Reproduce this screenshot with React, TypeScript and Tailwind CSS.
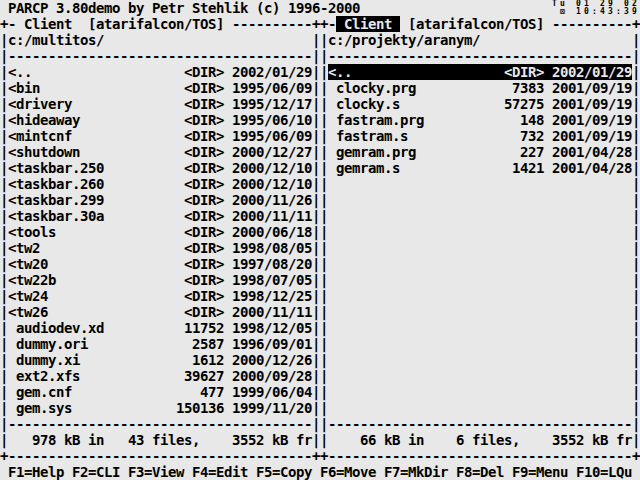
import React from 'react';

// Ein Eintrag im Dateifenster
interface Eintrag {
  name: string;
  dir: boolean;
  size?: string;
  date: string;
}

const links: Eintrag[] = [
  { name: '..', dir: true, date: '2002/01/29' },
  { name: 'bin', dir: true, date: '1995/06/09' },
  { name: 'drivery', dir: true, date: '1995/12/17' },
  { name: 'hideaway', dir: true, date: '1995/06/10' },
  { name: 'mintcnf', dir: true, date: '1995/06/09' },
  { name: 'shutdown', dir: true, date: '2000/12/27' },
  { name: 'taskbar.250', dir: true, date: '2000/12/10' },
  { name: 'taskbar.260', dir: true, date: '2000/12/10' },
  { name: 'taskbar.299', dir: true, date: '2000/11/26' },
  { name: 'taskbar.30a', dir: true, date: '2000/11/11' },
  { name: 'tools', dir: true, date: '2000/06/18' },
  { name: 'tw2', dir: true, date: '1998/08/05' },
  { name: 'tw20', dir: true, date: '1997/08/20' },
  { name: 'tw22b', dir: true, date: '1998/07/05' },
  { name: 'tw24', dir: true, date: '1998/12/25' },
  { name: 'tw26', dir: true, date: '2000/11/11' },
  { name: 'audiodev.xd', dir: false, size: '11752', date: '1998/12/05' },
  { name: 'dummy.ori', dir: false, size: '2587', date: '1996/09/01' },
  { name: 'dummy.xi', dir: false, size: '1612', date: '2000/12/26' },
  { name: 'ext2.xfs', dir: false, size: '39627', date: '2000/09/28' },
  { name: 'gem.cnf', dir: false, size: '477', date: '1999/06/04' },
  { name: 'gem.sys', dir: false, size: '150136', date: '1999/11/20' },
];

const rechts: Eintrag[] = [
  { name: '..', dir: true, date: '2002/01/29' },
  { name: 'clocky.prg', dir: false, size: '7383', date: '2001/09/19' },
  { name: 'clocky.s', dir: false, size: '57275', date: '2001/09/19' },
  { name: 'fastram.prg', dir: false, size: '148', date: '2001/09/19' },
  { name: 'fastram.s', dir: false, size: '732', date: '2001/09/19' },
  { name: 'gemram.prg', dir: false, size: '227', date: '2001/04/28' },
  { name: 'gemram.s', dir: false, size: '1421', date: '2001/04/28' },
];

const zeile = (e?: Eintrag) => {
  if (!e) return ' '.repeat(38);
  const rechtsTeil = `${e.dir ? '<DIR>' : e.size} ${e.date}`;
  return ((e.dir ? '<' : ' ') + e.name).padEnd(38 - rechtsTeil.length) + rechtsTeil;
};

const strich = '-'.repeat(38);

function Row({ children }: { children: React.ReactNode }) {
  return <div className="h-[16px] whitespace-pre leading-[16px]">{children}</div>;
}

function Inv({ children }: { children: React.ReactNode }) {
  return <span className="bg-black text-[#e8e8e8]">{children}</span>;
}

export default function App() {
  const rows: React.ReactNode[] = [];

  rows.push(
    <div key="t" className="flex h-[16px] justify-between">
      <div className="whitespace-pre leading-[16px]"> PARCP 3.80demo by Petr Stehlik (c) 1996-2000</div>
      <div className="flex flex-col items-end whitespace-pre text-[8px] leading-[8px] tracking-[3.18px]">
        <div className="h-[8px]">Tu 01 29 02</div>
        <div className="h-[8px]">⊠ 10:43:39</div>
      </div>
    </div>
  );
  rows.push(
    <Row key="h">
      {'+- Client  [atarifalcon/TOS] ----------++-'}
      <Inv> Client </Inv>
      {' [atarifalcon/TOS] ----------+'}
    </Row>
  );
  rows.push(
    <Row key="p">{'|' + 'c:/multitos/'.padEnd(38) + '||' + 'c:/projekty/aranym/'.padEnd(38) + '|'}</Row>
  );
  rows.push(<Row key="s1">{`|${strich}||${strich}|`}</Row>);

  for (let i = 0; i < 22; i++) {
    rows.push(
      <Row key={'e' + i}>
        {'|' + zeile(links[i]) + '||'}
        {i === 0 ? <Inv>{zeile(rechts[i])}</Inv> : zeile(rechts[i])}
        {'|'}
      </Row>
    );
  }

  rows.push(<Row key="s2">{`|${strich}||${strich}|`}</Row>);
  rows.push(
    <Row key="st">
      {'|   978 kB in   43 files,    3552 kB fr||    66 kB in    6 files,    3552 kB fr|'}
    </Row>
  );
  rows.push(<Row key="s3">{`+${strich}++${strich}+`}</Row>);
  rows.push(
    <Row key="f">
      {' F1=Help F2=CLI F3=View F4=Edit F5=Copy F6=Move F7=MkDir F8=Del F9=Menu F10=LQu'}
    </Row>
  );

  return (
    <div className="h-[480px] w-[640px] overflow-hidden bg-[#e8e8e8] font-['DejaVu_Sans_Mono',monospace] text-[14px] font-bold tracking-[-0.43px] text-black">
      {rows}
    </div>
  );
}
